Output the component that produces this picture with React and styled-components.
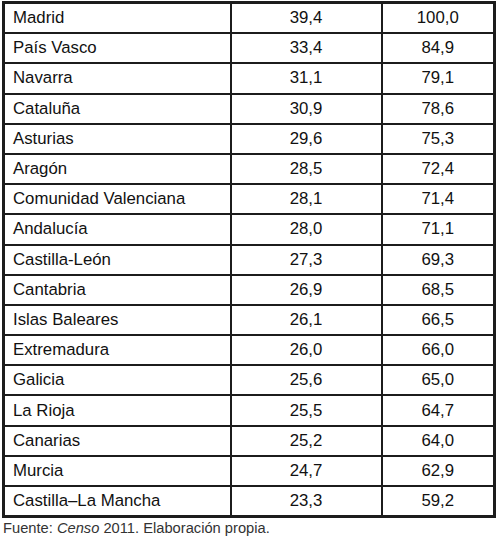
import React from 'react';
import styled, { createGlobalStyle } from 'styled-components';

const Global = createGlobalStyle`
  body {
    margin: 0;
    background: #fff;
    font-family: "Liberation Sans", Arial, sans-serif;
    color: #111;
  }
`;

const rows = [
  ['Madrid', '39,4', '100,0'],
  ['País Vasco', '33,4', '84,9'],
  ['Navarra', '31,1', '79,1'],
  ['Cataluña', '30,9', '78,6'],
  ['Asturias', '29,6', '75,3'],
  ['Aragón', '28,5', '72,4'],
  ['Comunidad Valenciana', '28,1', '71,4'],
  ['Andalucía', '28,0', '71,1'],
  ['Castilla-León', '27,3', '69,3'],
  ['Cantabria', '26,9', '68,5'],
  ['Islas Baleares', '26,1', '66,5'],
  ['Extremadura', '26,0', '66,0'],
  ['Galicia', '25,6', '65,0'],
  ['La Rioja', '25,5', '64,7'],
  ['Canarias', '25,2', '64,0'],
  ['Murcia', '24,7', '62,9'],
  ['Castilla–La Mancha', '23,3', '59,2'],
];

const Wrap = styled.div`
  padding: 1px 4px 0 2px;
`;

const Table = styled.table`
  width: 491px;
  table-layout: fixed;
  border-collapse: collapse;
  border: 3px solid #1c1c1c;
  font-size: 16.8px;
`;

const Col = styled.col`
  width: ${p => p.$w}px;
`;

const Cell = styled.td`
  border: 2px solid #1c1c1c;
  height: 28.2px;
  padding: 0 ${p => (p.$name ? '8px' : '0')};
  text-align: ${p => (p.$name ? 'left' : 'center')};
  line-height: 20px;
  white-space: nowrap;
`;

const Source = styled.p`
  margin: 2px 0 0 1px;
  font-size: 14.7px;
  color: #333;
`;

export default function App() {
  return (
    <Wrap>
      <Global />
      <Table>
        <colgroup>
          <Col $w={227} />
          <Col $w={151} />
          <Col $w={113} />
        </colgroup>
        <tbody>
          {rows.map(([name, a, b]) => (
            <tr key={name}>
              <Cell $name>{name}</Cell>
              <Cell>{a}</Cell>
              <Cell>{b}</Cell>
            </tr>
          ))}
        </tbody>
      </Table>
      <Source>
        Fuente: <em>Censo</em> 2011. Elaboración propia.
      </Source>
    </Wrap>
  );
}
